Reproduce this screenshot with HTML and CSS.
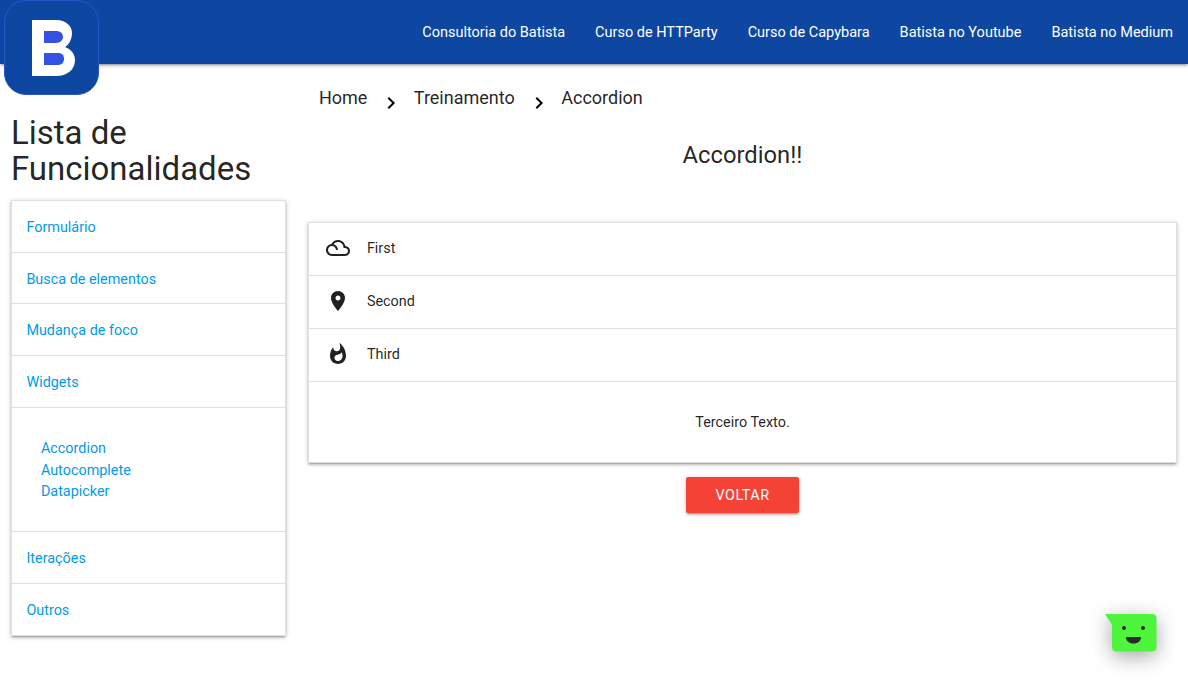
FILE: index.html
```html
<!DOCTYPE html>
<html lang="en">
<head>
    <meta charset="UTF-8">
    <title>Accordion</title>
    <link rel="stylesheet" href="styles.css">
</head>
<body>
    <nav class="topbar">
        <a class="topbar-link">Consultoria do Batista</a>
        <a class="topbar-link">Curso de HTTParty</a>
        <a class="topbar-link">Curso de Capybara</a>
        <a class="topbar-link">Batista no Youtube</a>
        <a class="topbar-link">Batista no Medium</a>
    </nav>
    <!-- logo hangs over the bar -->
    <div class="logo">
        <svg width="43" height="56" viewBox="0 0 43 56">
            <path class="logo-b" d="M0 0H24C34 0 40 6 40 13C40 19 37 25 33 27C39 29 43 34 43 40C43 50 35 56 24 56H0Z"/>
            <path class="logo-fill" d="M12 11V23H24C28 23 31 20 31 17C31 13 28 11 24 11ZM12 33V45H26C30 45 32 42 32 39C32 35 30 33 26 33Z"/>
        </svg>
    </div>

    <div class="page">
        <aside class="sidebar">
            <h4 class="sidebar-title">Lista de Funcionalidades</h4>
            <ul class="menu">
                <li class="menu-item"><a>Formulário</a></li>
                <li class="menu-item"><a>Busca de elementos</a></li>
                <li class="menu-item"><a>Mudança de foco</a></li>
                <li class="menu-item"><a>Widgets</a></li>
                <li class="menu-sub">
                    <a>Accordion</a>
                    <a>Autocomplete</a>
                    <a>Datapicker</a>
                </li>
                <li class="menu-item"><a>Iterações</a></li>
                <li class="menu-item"><a>Outros</a></li>
            </ul>
        </aside>

        <main class="content">
            <div class="crumbs">
                <span>Home</span>
                <svg class="crumb-arrow" width="24" height="24" viewBox="0 0 24 24"><path d="M10 6L8.59 7.41 13.17 12l-4.58 4.59L10 18l6-6z"/></svg>
                <span>Treinamento</span>
                <svg class="crumb-arrow" width="24" height="24" viewBox="0 0 24 24"><path d="M10 6L8.59 7.41 13.17 12l-4.58 4.59L10 18l6-6z"/></svg>
                <span>Accordion</span>
            </div>
            <h5 class="page-title">Accordion!!</h5>
            <ul class="accordion">
                <li class="acc-head">
                    <svg class="acc-icon" width="24" height="24" viewBox="0 0 24 24"><path d="M19.35 10.04C18.67 6.59 15.64 4 12 4c-2.89 0-5.4 1.64-6.65 4.04C2.34 8.36 0 10.91 0 14c0 3.31 2.69 6 6 6h13c2.76 0 5-2.24 5-5 0-2.64-2.05-4.78-4.65-4.96zM19 18H6c-2.21 0-4-1.79-4-4s1.79-4 4-4 4 1.79 4 4h2c0-2.76-1.86-5.08-4.4-5.78C8.61 6.88 10.2 6 12 6c3.03 0 5.5 2.47 5.5 5.5v.5H19c1.65 0 3 1.35 3 3s-1.35 3-3 3z"/></svg>
                    First
                </li>
                <li class="acc-head">
                    <svg class="acc-icon" width="24" height="24" viewBox="0 0 24 24"><path d="M12 2C8.13 2 5 5.13 5 9c0 5.25 7 13 7 13s7-7.75 7-13c0-3.87-3.13-7-7-7zm0 9.5c-1.38 0-2.5-1.12-2.5-2.5s1.12-2.5 2.5-2.5 2.5 1.12 2.5 2.5-1.12 2.5-2.5 2.5z"/></svg>
                    Second
                </li>
                <li class="acc-head">
                    <svg class="acc-icon" width="24" height="24" viewBox="0 0 24 24"><path d="M13.5.67s.74 2.65.74 4.8c0 2.06-1.35 3.73-3.41 3.73-2.07 0-3.63-1.67-3.63-3.73l.03-.36C5.21 7.51 4 10.62 4 14c0 4.42 3.58 8 8 8s8-3.58 8-8C20 8.61 17.41 3.8 13.5.67zM11.71 19c-1.78 0-3.22-1.4-3.22-3.14 0-1.62 1.05-2.76 2.81-3.12 1.77-.36 3.6-1.21 4.62-2.58.39 1.29.59 2.65.59 4.04 0 2.65-2.15 4.8-4.8 4.8z"/></svg>
                    Third
                </li>
                <li class="acc-body">Terceiro Texto.</li>
            </ul>
            <div class="actions">
                <button class="back-btn">VOLTAR</button>
            </div>
        </main>
    </div>

    <!-- chat widget -->
    <div class="chat-widget">
        <svg width="52" height="38" viewBox="0 0 52 38">
            <path class="chat-bubble" d="M0 0H47C50 0 51.5 2 51.5 4V33C51.5 36 50 37.5 47 37.5H11C9 37.5 7 36 7 33V11Z"/>
            <circle class="chat-face" cx="19" cy="14" r="2"/>
            <circle class="chat-face" cx="38" cy="14" r="2"/>
            <path class="chat-face" d="M21 23H36C36 27 33 29.5 28.5 29.5C24 29.5 21 27 21 23Z"/>
        </svg>
    </div>
</body>
</html>
```

FILE: styles.css
```css
* {
    box-sizing: border-box;
}

body {
    margin: 0;
    background-color: #fff;
    color: rgba(0, 0, 0, 0.87);
    font-family: Roboto, sans-serif;
    font-size: 14.4px;
}

ul {
    list-style: none;
    margin: 0;
    padding: 0;
}

.topbar {
    display: flex;
    justify-content: flex-end;
    align-items: center;
    height: 64px;
    background-color: #0d47a1;
    box-shadow: 0 2px 2px 0 rgba(0, 0, 0, 0.14), 0 3px 1px -2px rgba(0, 0, 0, 0.12), 0 1px 5px 0 rgba(0, 0, 0, 0.2);
}

.topbar-link {
    padding: 0 15px;
    color: #fff;
    font-size: 14.5px;
}

.logo {
    position: absolute;
    top: 0;
    left: 4px;
    width: 95px;
    height: 95px;
    display: flex;
    justify-content: center;
    align-items: center;
    padding-left: 4px;
    background-color: #0d47a1;
    border: 1px solid #2a55c9;
    border-radius: 22px;
}

.logo-b {
    fill: #fff;
}

.logo-fill {
    fill: #3451e3;
}

.page {
    display: flex;
    align-items: flex-start;
}

.sidebar {
    width: 25%;
    flex-shrink: 0;
    padding: 51px 1% 30px;
}

.sidebar-title {
    margin: 0 0 13.2px -1px;
    font-size: 33px;
    font-weight: 400;
    line-height: 36px;
}

.menu {
    margin: 0 -0.5px;
    border: 1px solid #e0e0e0;
    box-shadow: 0 2px 2px 0 rgba(0, 0, 0, 0.14), 0 3px 1px -2px rgba(0, 0, 0, 0.12), 0 1px 5px 0 rgba(0, 0, 0, 0.2);
    color: #039be5;
}

.menu-item {
    height: 51.6px;
    padding-left: 14px;
    line-height: 53.2px;
    border-bottom: 1px solid #e0e0e0;
}

.menu-item:last-child {
    border-bottom: none;
}

.menu-sub {
    display: flex;
    flex-direction: column;
    height: 124.4px;
    padding: 30.5px 0 0 28.5px;
    line-height: 21.6px;
    border-bottom: 1px solid #e0e0e0;
}

.content {
    flex: 1;
    padding: 0 1%;
}

.crumbs {
    display: flex;
    align-items: center;
    height: 24px;
    margin-top: 21px;
    padding-left: 10px;
    font-size: 18px;
}

.crumb-arrow {
    margin: 11px 10.5px 0 12px;
}

.page-title {
    margin: 33px 0 0;
    font-size: 23.76px;
    font-weight: 400;
    line-height: 26px;
    text-align: center;
}

.accordion {
    margin: 54px -0.5px 0;
    border: 1px solid #e0e0e0;
    box-shadow: 0 2px 2px 0 rgba(0, 0, 0, 0.14), 0 3px 1px -2px rgba(0, 0, 0, 0.12), 0 1px 5px 0 rgba(0, 0, 0, 0.2);
}

.acc-head {
    display: flex;
    align-items: center;
    height: 53px;
    padding: 0 0 2px 16.5px;
    border-bottom: 1px solid #e0e0e0;
}

.acc-icon {
    margin-right: 17px;
    fill: rgba(0, 0, 0, 0.87);
}

.acc-body {
    height: 80px;
    padding-top: 32px;
    text-align: center;
}

.actions {
    display: flex;
    justify-content: center;
    margin-top: 14px;
}

.back-btn {
    width: 113px;
    height: 36px;
    border: none;
    border-radius: 2px;
    background-color: #f44336;
    color: #fff;
    font-family: Roboto, sans-serif;
    font-size: 14.4px;
    letter-spacing: 0.5px;
    box-shadow: 0 2px 2px 0 rgba(0, 0, 0, 0.14), 0 3px 1px -2px rgba(0, 0, 0, 0.12), 0 1px 5px 0 rgba(0, 0, 0, 0.2);
}

.chat-widget {
    position: absolute;
    top: 614px;
    left: 1105px;
    width: 52px;
    height: 38px;
    filter: drop-shadow(0 5px 10px rgba(0, 0, 0, 0.35));
}

.chat-bubble {
    fill: #4ff53c;
}

.chat-face {
    fill: #2b2b2b;
}
```
